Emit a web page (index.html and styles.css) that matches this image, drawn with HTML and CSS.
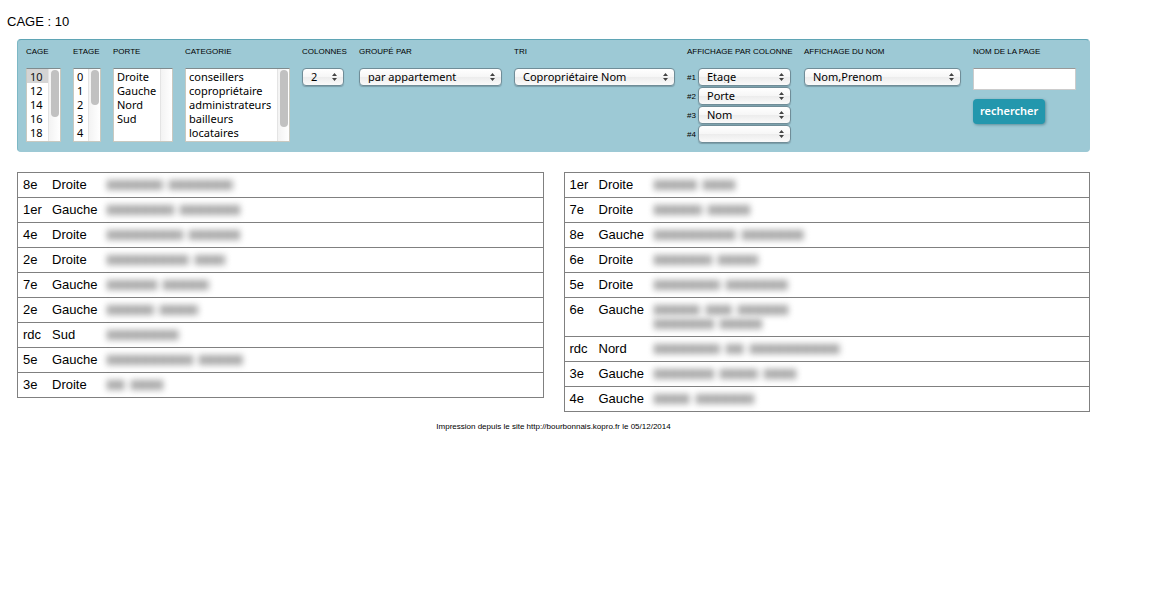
FILE: index.html
```html
<!DOCTYPE html>
<html lang="fr">
<head>
    <meta charset="utf-8">
    <title>CAGE : 10</title>
    <link rel="stylesheet" href="styles.css">
</head>
<body>
    <h1>CAGE : 10</h1>
    <main>
        <form class="filters">
            <div class="field">
                <label for="cage">CAGE</label>
                <div class="list list-cage">
                    <select id="cage" multiple size="5">
                        <option selected>10</option>
                        <option>12</option>
                        <option>14</option>
                        <option>16</option>
                        <option>18</option>
                    </select>
                    <span class="track"><span class="thumb thumb-medium"></span></span>
                </div>
            </div>
            <div class="field">
                <label for="etage">ETAGE</label>
                <div class="list list-etage">
                    <select id="etage" multiple size="5">
                        <option>0</option>
                        <option>1</option>
                        <option>2</option>
                        <option>3</option>
                        <option>4</option>
                    </select>
                    <span class="track"><span class="thumb thumb-short"></span></span>
                </div>
            </div>
            <div class="field">
                <label for="porte">PORTE</label>
                <div class="list list-porte">
                    <select id="porte" multiple size="5">
                        <option>Droite</option>
                        <option>Gauche</option>
                        <option>Nord</option>
                        <option>Sud</option>
                    </select>
                    <span class="track"></span>
                </div>
            </div>
            <div class="field">
                <label for="categorie">CATEGORIE</label>
                <div class="list list-categorie">
                    <select id="categorie" multiple size="5">
                        <option>conseillers</option>
                        <option>copropriétaire</option>
                        <option>administrateurs</option>
                        <option>bailleurs</option>
                        <option>locataires</option>
                    </select>
                    <span class="track"><span class="thumb thumb-long"></span></span>
                </div>
            </div>
            <div class="field field-colonnes">
                <label for="colonnes">COLONNES</label>
                <select id="colonnes" class="popup popup-colonnes"><option>2</option></select>
            </div>
            <div class="field field-groupe">
                <label for="groupe">GROUPÉ PAR</label>
                <select id="groupe" class="popup"><option>par appartement</option></select>
            </div>
            <div class="field field-tri">
                <label for="tri">TRI</label>
                <select id="tri" class="popup"><option>Copropriétaire Nom</option></select>
            </div>
            <div class="field field-affichage">
                <span class="title">AFFICHAGE PAR COLONNE</span>
                <div class="choice">
                    <label for="col1">#1</label>
                    <select id="col1" class="popup"><option>Etage</option></select>
                </div>
                <div class="choice">
                    <label for="col2">#2</label>
                    <select id="col2" class="popup"><option>Porte</option></select>
                </div>
                <div class="choice">
                    <label for="col3">#3</label>
                    <select id="col3" class="popup"><option>Nom</option></select>
                </div>
                <div class="choice">
                    <label for="col4">#4</label>
                    <select id="col4" class="popup"><option></option></select>
                </div>
            </div>
            <div class="field field-nom">
                <label for="nom">AFFICHAGE DU NOM</label>
                <select id="nom" class="popup"><option>Nom,Prenom</option></select>
            </div>
            <div class="field field-page">
                <label for="page">NOM DE LA PAGE</label>
                <input type="text" id="page">
                <button type="button" class="button">rechercher</button>
            </div>
        </form>

        <div class="columns">
            <table class="names">
                <tr><td>8e</td><td>Droite</td><td><span class="masked"><i style="width: 56px"></i><i style="width: 64px"></i></span></td></tr>
                <tr><td>1er</td><td>Gauche</td><td><span class="masked"><i style="width: 67px"></i><i style="width: 60px"></i></span></td></tr>
                <tr><td>4e</td><td>Droite</td><td><span class="masked"><i style="width: 76px"></i><i style="width: 51px"></i></span></td></tr>
                <tr><td>2e</td><td>Droite</td><td><span class="masked"><i style="width: 82px"></i><i style="width: 30px"></i></span></td></tr>
                <tr><td>7e</td><td>Gauche</td><td><span class="masked"><i style="width: 50px"></i><i style="width: 46px"></i></span></td></tr>
                <tr><td>2e</td><td>Gauche</td><td><span class="masked"><i style="width: 47px"></i><i style="width: 38px"></i></span></td></tr>
                <tr><td>rdc</td><td>Sud</td><td><span class="masked"><i style="width: 72px"></i></span></td></tr>
                <tr><td>5e</td><td>Gauche</td><td><span class="masked"><i style="width: 86px"></i><i style="width: 44px"></i></span></td></tr>
                <tr><td>3e</td><td>Droite</td><td><span class="masked"><i style="width: 18px"></i><i style="width: 32px"></i></span></td></tr>
            </table>
            <table class="names">
                <tr><td>1er</td><td>Droite</td><td><span class="masked"><i style="width: 43px"></i><i style="width: 32px"></i></span></td></tr>
                <tr><td>7e</td><td>Droite</td><td><span class="masked"><i style="width: 48px"></i><i style="width: 42px"></i></span></td></tr>
                <tr><td>8e</td><td>Gauche</td><td><span class="masked"><i style="width: 82px"></i><i style="width: 62px"></i></span></td></tr>
                <tr><td>6e</td><td>Droite</td><td><span class="masked"><i style="width: 58px"></i><i style="width: 40px"></i></span></td></tr>
                <tr><td>5e</td><td>Droite</td><td><span class="masked"><i style="width: 66px"></i><i style="width: 62px"></i></span></td></tr>
                <tr><td>6e</td><td>Gauche</td><td><span class="masked"><i style="width: 46px"></i><i style="width: 26px"></i><i style="width: 50px"></i></span><span class="masked"><i style="width: 60px"></i><i style="width: 42px"></i></span></td></tr>
                <tr><td>rdc</td><td>Nord</td><td><span class="masked"><i style="width: 66px"></i><i style="width: 18px"></i><i style="width: 90px"></i></span></td></tr>
                <tr><td>3e</td><td>Gauche</td><td><span class="masked"><i style="width: 60px"></i><i style="width: 38px"></i><i style="width: 32px"></i></span></td></tr>
                <tr><td>4e</td><td>Gauche</td><td><span class="masked"><i style="width: 36px"></i><i style="width: 58px"></i></span></td></tr>
            </table>
        </div>
        <footer>Impression depuis le site http://bourbonnais.kopro.fr le 05/12/2014</footer>
    </main>
</body>
</html>
```
FILE: styles.css
```css
body {
    margin: 0;
    padding: 15px 86px 0 7px;
    background: #fff;
    color: #000;
    font-family: Helvetica, "Liberation Sans", Arial, sans-serif;
    font-size: 13px;
    line-height: 14px;
}

h1 {
    margin: 0 0 10px;
    font-size: 13px;
    font-weight: normal;
}

main {
    margin-left: 10px;
}

.filters {
    display: flex;
    align-items: flex-start;
    gap: 12px;
    padding: 7px 8px;
    border: 1px solid #9dc9d5;
    border-top-color: #5fa5b5;
    border-left-color: #7db8c5;
    border-radius: 4px;
    background: #9dc9d5;
    font-size: 8px;
}

.field {
    display: flex;
    flex-direction: column;
    flex-shrink: 0;
}

.field > label, .title {
    height: 21px;
    line-height: 10px;
    white-space: nowrap;
}

.field-colonnes {
    width: 45px;
}

.field-groupe {
    width: 143px;
}

.field-tri {
    width: 161px;
}

.field-affichage {
    width: 105px;
}

.field-nom {
    width: 157px;
}

.field-page {
    width: 103px;
}

select, input, button {
    box-sizing: border-box;
    margin: 0;
    font-family: "Lucida Grande", "Noto Sans", sans-serif;
    font-size: 11px;
    color: #000;
}

/* listes */
.list {
    position: relative;
    height: 74px;
}

.list select {
    width: 100%;
    height: 100%;
    padding: 0;
    border: 1px solid #c9c9c0;
    border-top-color: #7f8b8e;
    border-radius: 0;
    background: #fff;
    overflow: hidden;
    outline: none;
}

.list option {
    min-height: 14px;
    height: 14px;
    padding: 0 3px;
    line-height: 14px;
}

.list option:checked {
    background: #d4d4d4 linear-gradient(#d4d4d4, #d4d4d4);
}

.list-cage {
    width: 35px;
}

.list-etage {
    width: 28px;
}

.list-porte {
    width: 60px;
}

.list-categorie {
    width: 105px;
}

.track {
    position: absolute;
    top: 1px;
    right: 1px;
    bottom: 1px;
    width: 12px;
    border-left: 1px solid #e4e4e4;
    box-sizing: border-box;
    background: linear-gradient(to right, #f3f3f3, #fff);
    pointer-events: none;
}

.thumb {
    display: block;
    width: 8px;
    margin: 1px auto;
    border-radius: 4px;
    background: #c1c1c1;
}

.thumb-short {
    height: 35px;
}

.thumb-medium {
    height: 47px;
}

.thumb-long {
    height: 57px;
}

/* menus */
.popup {
    width: 100%;
    height: 18px;
    padding: 0 16px 2px 8px;
    border: 1px solid #708d98;
    border-radius: 4px;
    appearance: none;
    background: url("data:image/svg+xml,%3Csvg xmlns='http://www.w3.org/2000/svg' width='5' height='8'%3E%3Cpath d='M0 3L2.500 0L5 3ZM0 5H5L2.500 8Z' fill='%23444'/%3E%3C/svg%3E") no-repeat right 6px center, linear-gradient(#fff, #f6f6f6 50%, #ececec 50%, #fafafa);
    box-shadow: 0 1px 1px #7b9ea9;
}

.popup-colonnes {
    width: 42px;
}

.choice {
    display: flex;
    align-items: center;
    gap: 2px;
    width: 104px;
    margin-bottom: 1px;
}

.choice label {
    width: 9px;
    padding-top: 2px;
    flex-shrink: 0;
}

input {
    width: 103px;
    height: 22px;
    border: 1px solid #ccc;
    border-top-color: #999;
    background: #fff;
}

.button {
    align-self: flex-start;
    height: 25px;
    margin-top: 9px;
    padding: 0 7px 2px;
    border: none;
    border-radius: 4px;
    background: #2397ad;
    box-shadow: 1px 1px 3px #5d8d99;
    color: #fff;
    font-weight: 600;
}

.columns {
    display: flex;
    align-items: flex-start;
    gap: 20px;
    margin-top: 20px;
}

.names {
    flex: 1;
    border: 1px solid #808080;
    border-collapse: collapse;
}

.names tr {
    border-bottom: 1px solid #808080;
}

.names td {
    padding: 5px 0;
    vertical-align: top;
}

.names td:nth-child(1) {
    width: 29px;
    padding-left: 5px;
}

.names td:nth-child(2) {
    width: 55px;
}

/* noms masqués */
.masked {
    display: flex;
    align-items: center;
    gap: 6px;
    height: 14px;
    filter: blur(3px);
}

.masked i {
    height: 10px;
    background: repeating-linear-gradient(to right, #a2a2a2 0, #a2a2a2 5px, #b8b8b8 5px, #b8b8b8 9px);
}

footer {
    margin-top: 8px;
    font-size: 8px;
    text-align: center;
}
```
